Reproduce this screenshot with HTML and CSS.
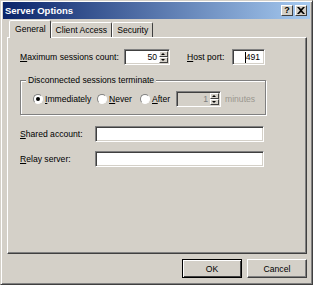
FILE: index.html
```html
<!DOCTYPE html>
<html lang="en">
<head>
  <meta charset="UTF-8">
  <title>Server Options</title>
  <link rel="stylesheet" href="styles.css">
</head>
<body>
  <div class="window">
    <div class="titlebar">
      <span class="title">Server Options</span>
      <div class="caption-btns">
        <span class="cap-btn">?</span>
        <span class="cap-btn close">
          <svg width="8" height="7" viewBox="0 0 8 7"><path d="M0 0h2l2 2 2-2h2L5 3.5 8 7H6L4 5 2 7H0l3-3.5z" fill="#000"/></svg>
        </span>
      </div>
    </div>

    <div class="tabs">
      <div class="tab active">General</div>
      <div class="tab">Client Access</div>
      <div class="tab">Security</div>
    </div>

    <div class="panel">
      <div class="row">
        <span class="label"><u>M</u>aximum sessions count:</span>
        <div class="field spin"><span class="val">50</span><span class="spinbtns"><i></i><i></i></span></div>
        <span class="label host"><u>H</u>ost port:</span>
        <div class="field port"><span class="caret"></span><span class="val">491</span></div>
      </div>

      <div class="group">
        <span class="legend">Disconnected sessions terminate</span>
        <div class="radios">
          <span class="radio checked"></span><span class="opt imm"><u>I</u>mmediately</span>
          <span class="radio"></span><span class="opt never"><u>N</u>ever</span>
          <span class="radio"></span><span class="opt after"><u>A</u>fter</span>
          <div class="field spin disabled"><span class="val">1</span><span class="spinbtns"><i></i><i></i></span></div>
          <span class="opt grey">minutes</span>
        </div>
      </div>

      <div class="row text-row">
        <span class="label wide"><u>S</u>hared account:</span>
        <div class="field long"></div>
      </div>
      <div class="row text-row">
        <span class="label wide"><u>R</u>elay server:</span>
        <div class="field long"></div>
      </div>
    </div>

    <div class="buttons">
      <span class="btn default">OK</span>
      <span class="btn">Cancel</span>
    </div>
  </div>
</body>
</html>
```
FILE: styles.css
```css
body {
  margin: 0;
  background: #d4d0c8;
  font-family: "Liberation Sans", Arial, sans-serif;
  font-size: 8.6px;
  color: #000;
}

.window {
  width: 313px;
  height: 285px;
  box-sizing: border-box;
  border: 1px solid;
  border-color: #d4d0c8 #404040 #404040 #d4d0c8;
  box-shadow: inset 1px 1px #fff, inset -1px -1px #808080;
  padding: 1px 2px;
  background: #d4d0c8;
}

.titlebar {
  height: 17px;
  display: flex;
  align-items: center;
  justify-content: space-between;
  background: linear-gradient(to right, #0a246a, #a6caf0);
  padding: 0 3px 0 2px;
}

.title {
  color: #fff;
  font-weight: bold;
  font-size: 9.5px;
}

.caption-btns {
  display: flex;
  gap: 2px;
}

.cap-btn {
  width: 12px;
  height: 11px;
  box-sizing: border-box;
  background: #d4d0c8;
  border: 1px solid;
  border-color: #fff #404040 #404040 #fff;
  font-weight: bold;
  font-size: 9px;
  line-height: 9px;
  text-align: center;
  display: flex;
  align-items: center;
  justify-content: center;
}

.tabs {
  display: flex;
  align-items: flex-end;
  height: 17px;
  margin-top: 1px;
  padding-left: 6px;
  position: relative;
  z-index: 1;
}

.tab {
  height: 15px;
  box-sizing: border-box;
  padding: 1px 4px 0;
  border: 1px solid;
  border-bottom: none;
  border-color: #fff #404040 transparent #fff;
  border-radius: 2px 2px 0 0;
  line-height: 13px;
}

.tab.active {
  height: 18px;
  margin-bottom: -1px;
  padding: 2px 4px 0 5px;
  background: #d4d0c8;
}

.panel {
  width: 300px;
  height: 217px;
  box-sizing: border-box;
  margin-left: 4px;
  border: 1px solid;
  border-color: #fff #404040 #404040 #fff;
  box-shadow: inset -1px -1px #808080;
  padding: 11px 0 0 12px;
}

.row {
  display: flex;
  align-items: center;
  height: 16px;
}

.label {
  width: 104px;
}

.label.host {
  width: 45px;
  margin-left: 17px;
}

.field {
  height: 16px;
  box-sizing: border-box;
  background: #fff;
  border: 1px solid;
  border-color: #808080 #fff #fff #808080;
  box-shadow: inset 1px 1px #404040, inset -1px -1px #d4d0c8;
  display: flex;
  align-items: center;
  justify-content: flex-end;
}

.val {
  padding-right: 2px;
  line-height: 12px;
}

.spin {
  width: 46px;
}

.port {
  width: 33px;
}

.port .val {
  padding-right: 4px;
}

.caret {
  width: 1px;
  height: 11px;
  background: #000;
}

.spinbtns {
  display: flex;
  flex-direction: column;
  width: 9px;
  height: 12px;
  margin-right: 1px;
}

.spinbtns i {
  flex: 1;
  background: #d4d0c8;
  border: 1px solid;
  border-color: #fff #404040 #404040 #fff;
  box-sizing: border-box;
  position: relative;
}

.spinbtns i::after {
  content: "";
  position: absolute;
  left: 1px;
  top: 1px;
  border-left: 2px solid transparent;
  border-right: 2px solid transparent;
  border-bottom: 2px solid #000;
}

.spinbtns i + i::after {
  border-bottom: none;
  border-top: 2px solid #000;
}

.group {
  width: 246px;
  height: 35px;
  box-sizing: border-box;
  margin-top: 15px;
  border: 1px solid #808080;
  box-shadow: 1px 1px #fff, inset 1px 1px #fff;
  position: relative;
  padding: 10px 0 0 12px;
}

.legend {
  position: absolute;
  top: -6px;
  left: 5px;
  padding: 0 2px;
  background: #d4d0c8;
}

.radios {
  display: flex;
  align-items: center;
  height: 16px;
}

.radio {
  width: 10px;
  height: 10px;
  box-sizing: border-box;
  border-radius: 50%;
  background: #fff;
  border: 1px solid;
  border-color: #808080 #fff #fff #808080;
  margin-right: 2px;
  display: flex;
  align-items: center;
  justify-content: center;
}

.radio.checked::after {
  content: "";
  width: 4px;
  height: 4px;
  border-radius: 50%;
  background: #000;
}

.opt.imm {
  width: 52px;
}

.opt.never {
  width: 31px;
}

.opt.after {
  width: 24px;
}

.opt.grey {
  color: #9a978f;
  margin-left: 4px;
}

.field.disabled {
  background: #d4d0c8;
  color: #808080;
  width: 45px;
}

.text-row {
  margin-top: 11px;
}

.text-row + .text-row {
  margin-top: 9px;
}

.label.wide {
  width: 75px;
}

.field.long {
  width: 169px;
}

.buttons {
  display: flex;
  justify-content: flex-end;
  gap: 5px;
  margin-top: 5px;
  padding-right: 3px;
}

.btn {
  width: 60px;
  height: 19px;
  box-sizing: border-box;
  border: 1px solid;
  border-color: #fff #404040 #404040 #fff;
  box-shadow: inset -1px -1px #808080;
  display: flex;
  align-items: center;
  justify-content: center;
}

.btn.default {
  border-color: #000;
  box-shadow: inset 1px 1px #fff, inset -1px -1px #404040;
}
```
